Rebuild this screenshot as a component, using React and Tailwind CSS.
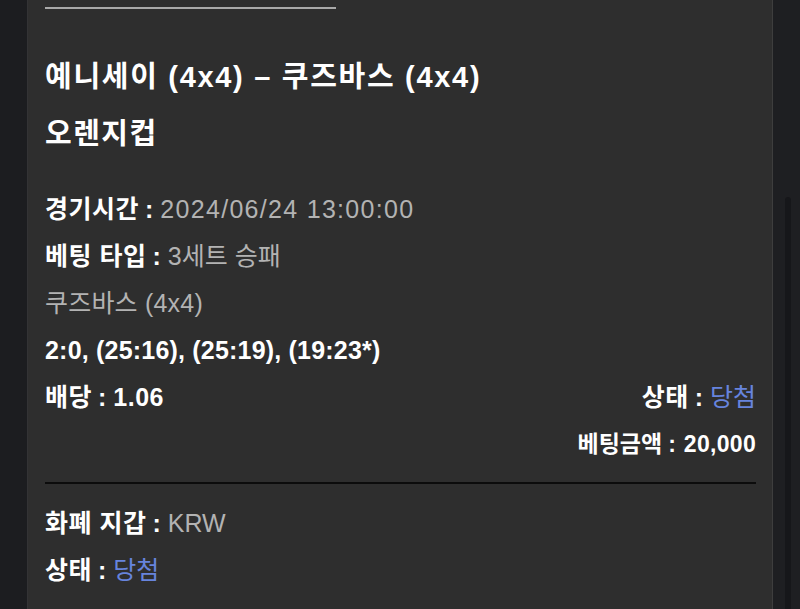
import React from "react";

const font = {
  fontFamily: '"Liberation Sans", "Noto Sans CJK KR", sans-serif',
};

const Label = ({ children }) => (
  <>
    <span className="font-bold text-white tracking-[0.5px]">{children}</span>
    <span className="font-bold text-white ml-[6px] mr-[7px]">:</span>
  </>
);

const Row = ({ label, children }) => (
  <div className="flex items-center h-[47px] text-[25px]">
    <Label>{label}</Label>
    {children}
  </div>
);

export default function App() {
  return (
    <div
      className="flex h-[609px] w-[800px] overflow-hidden bg-[#1c1d20]"
      style={font}
    >
      <div className="w-[27px] shrink-0 bg-[#1c1d20]" />
      <div className="flex-1 bg-[#2e2e2e] border-l border-[#333335] border-r border-r-[#3e3e3e] pl-[17px] pr-[16px]">
        <div className="mt-[7px] h-[2px] w-[291px] bg-[#a9a9a9]" />

        <div className="mt-[47px] text-[29px] font-bold text-white leading-[42px] tracking-[1.7px] whitespace-nowrap">
          예니세이 (4x4) – 쿠즈바스 (4x4)
        </div>
        <div className="mt-[15px] text-[29px] font-bold text-white leading-[42px] tracking-[1.5px]">
          오렌지컵
        </div>

        <div className="mt-[31px] flex flex-col">
          <Row label="경기시간">
            <span className="text-[#b3b3b3] tracking-[1.3px]">
              2024/06/24 13:00:00
            </span>
          </Row>
          <Row label="베팅 타입">
            <span className="text-[#b3b3b3]">3세트 승패</span>
          </Row>
          <div className="flex items-center h-[47px] text-[25px] text-[#b3b3b3] tracking-[0.2px]">
            쿠즈바스 (4x4)
          </div>
          <div className="flex items-center h-[47px] text-[25px] font-bold text-white tracking-[0.2px]">
            2:0, (25:16), (25:19), (19:23*)
          </div>
          <div className="flex items-center justify-between h-[47px] text-[25px]">
            <div className="flex items-center">
              <Label>배당</Label>
              <span className="font-bold text-white tracking-[0.5px]">1.06</span>
            </div>
            <div className="flex items-center">
              <Label>상태</Label>
              <span className="text-[#6784dd]">당첨</span>
            </div>
          </div>
          <div className="flex items-center justify-end h-[47px] text-[23px] font-bold text-white">
            <span>베팅금액</span>
            <span className="ml-[6px] mr-[8px]">:</span>
            <span className="tracking-[0.3px]">20,000</span>
          </div>
        </div>

        <div className="mt-[14px] h-[2px] w-full bg-[#0c0c0c]" />

        <div className="mt-[16px] flex flex-col">
          <Row label="화폐 지갑">
            <span className="text-[#b3b3b3]">KRW</span>
          </Row>
          <Row label="상태">
            <span className="text-[#6784dd]">당첨</span>
          </Row>
        </div>
      </div>
      <div className="w-[27px] shrink-0 bg-[#1e1f22] flex justify-center">
        <div className="mt-[197px] w-[6px] h-[412px] ml-[3px] rounded-t-full bg-[#16171a]" />
      </div>
    </div>
  );
}
